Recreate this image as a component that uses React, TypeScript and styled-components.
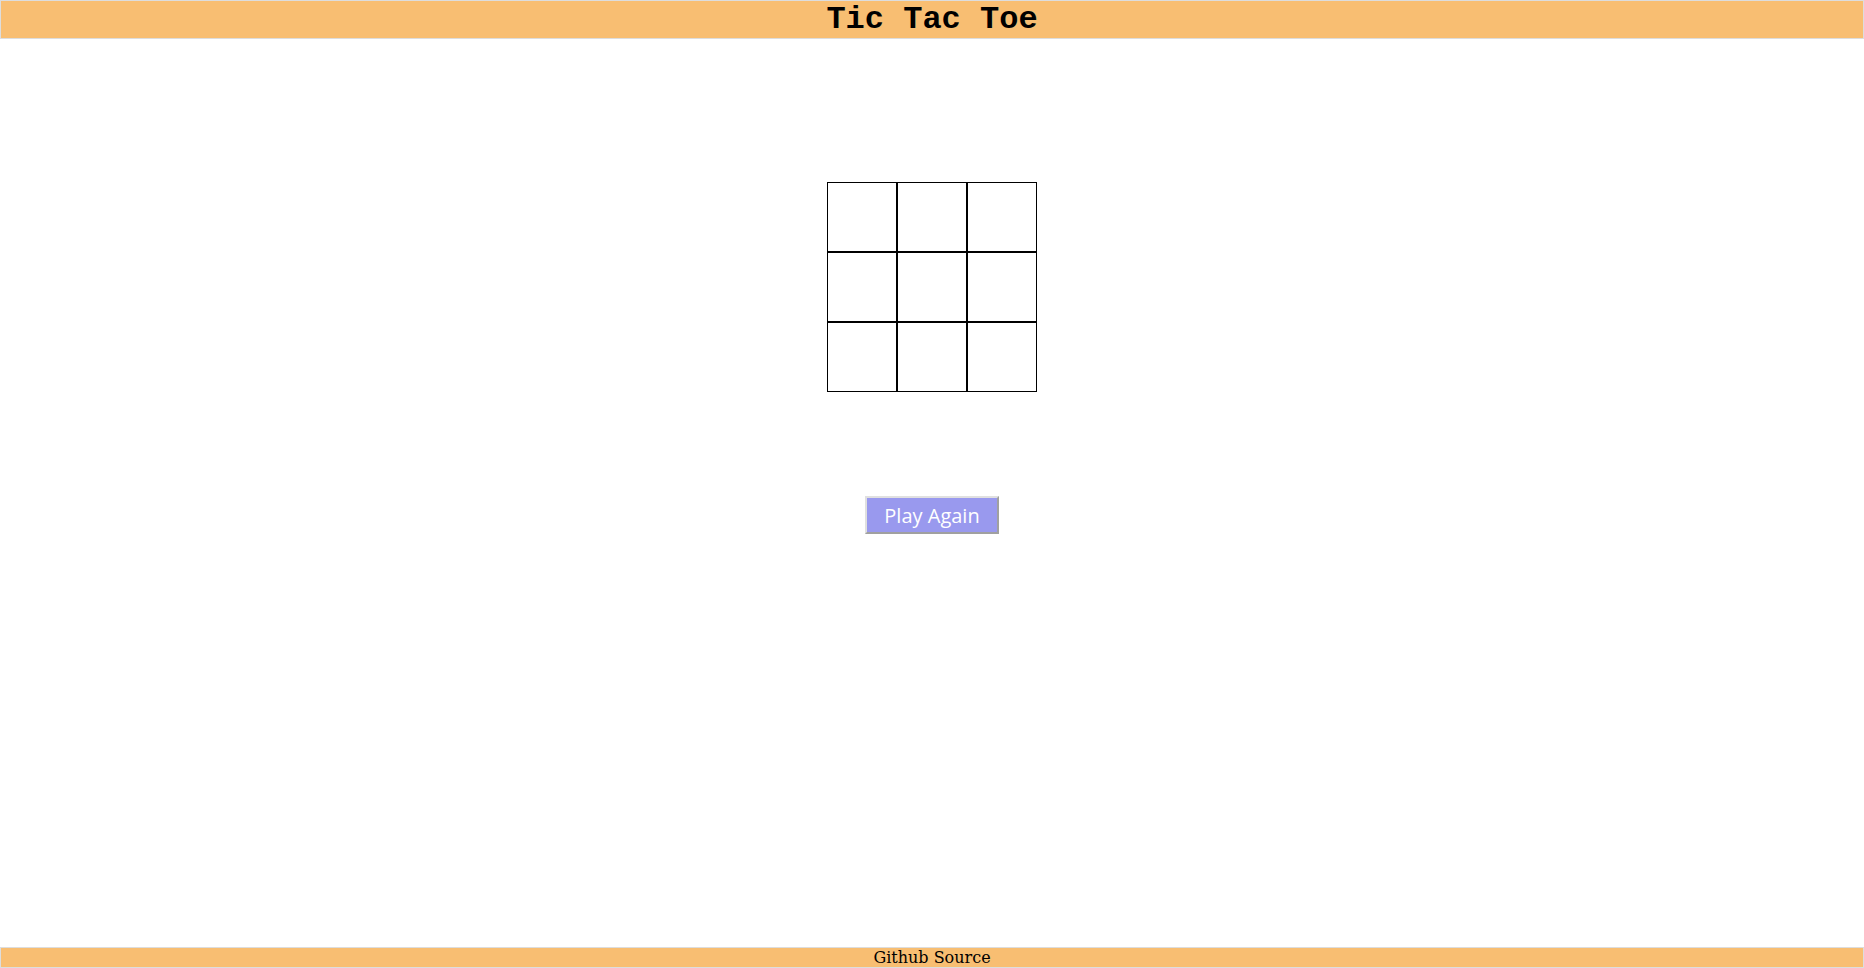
import React from "react";
import styled, { createGlobalStyle } from "styled-components";

const GlobalStyle = createGlobalStyle`
  html, body {
    margin: 0;
    padding: 0;
    background: #ffffff;
  }
  body {
    font-family: "DejaVu Serif", serif;
  }
`;

const Page = styled.div`
  display: flex;
  flex-direction: column;
  min-height: 100vh;
  box-sizing: border-box;
`;

const Header = styled.header`
  background: #f8be72;
  border: 1px solid #dddddd;
`;

const Title = styled.h1`
  margin: 0;
  font-family: "Liberation Mono", "Courier New", monospace;
  font-weight: bold;
  font-size: 32px;
  line-height: 37px;
  text-align: center;
  color: #000;
`;

const Main = styled.main`
  display: flex;
  flex-direction: column;
  align-items: center;
  padding-top: 143px;
  gap: 104px;
`;

const Board = styled.div`
  display: grid;
  grid-template-columns: repeat(3, 70px);
  grid-template-rows: repeat(3, 70px);
`;

const Cell = styled.div`
  box-sizing: border-box;
  border: 1px solid #000;
  background: #fff;
`;

const PlayButton = styled.button`
  box-sizing: border-box;
  width: 134px;
  height: 38px;
  padding: 0;
  background: #9999ee;
  color: #ffffff;
  font-family: "Open Sans", "Noto Sans", sans-serif;
  font-size: 20px;
  border: 2px solid;
  border-color: #e0e0e0 #a0a0a0 #a0a0a0 #e0e0e0;
  cursor: pointer;
`;

const Footer = styled.footer`
  margin-top: auto;
  background: #f8be72;
  border: 1px solid #dddddd;
  text-align: center;
  font-family: "DejaVu Serif", serif;
  font-size: 16px;
  line-height: 19px;
  color: #000;
`;

export default function App() {
  const cells = Array.from({ length: 9 }, (_, i) => i);
  return (
    <>
      <GlobalStyle />
      <Page>
        <Header>
          <Title>Tic Tac Toe</Title>
        </Header>
        <Main>
          <Board>
            {cells.map((i) => (
              <Cell key={i} />
            ))}
          </Board>
          <PlayButton>Play Again</PlayButton>
        </Main>
        <Footer>Github Source</Footer>
      </Page>
    </>
  );
}
